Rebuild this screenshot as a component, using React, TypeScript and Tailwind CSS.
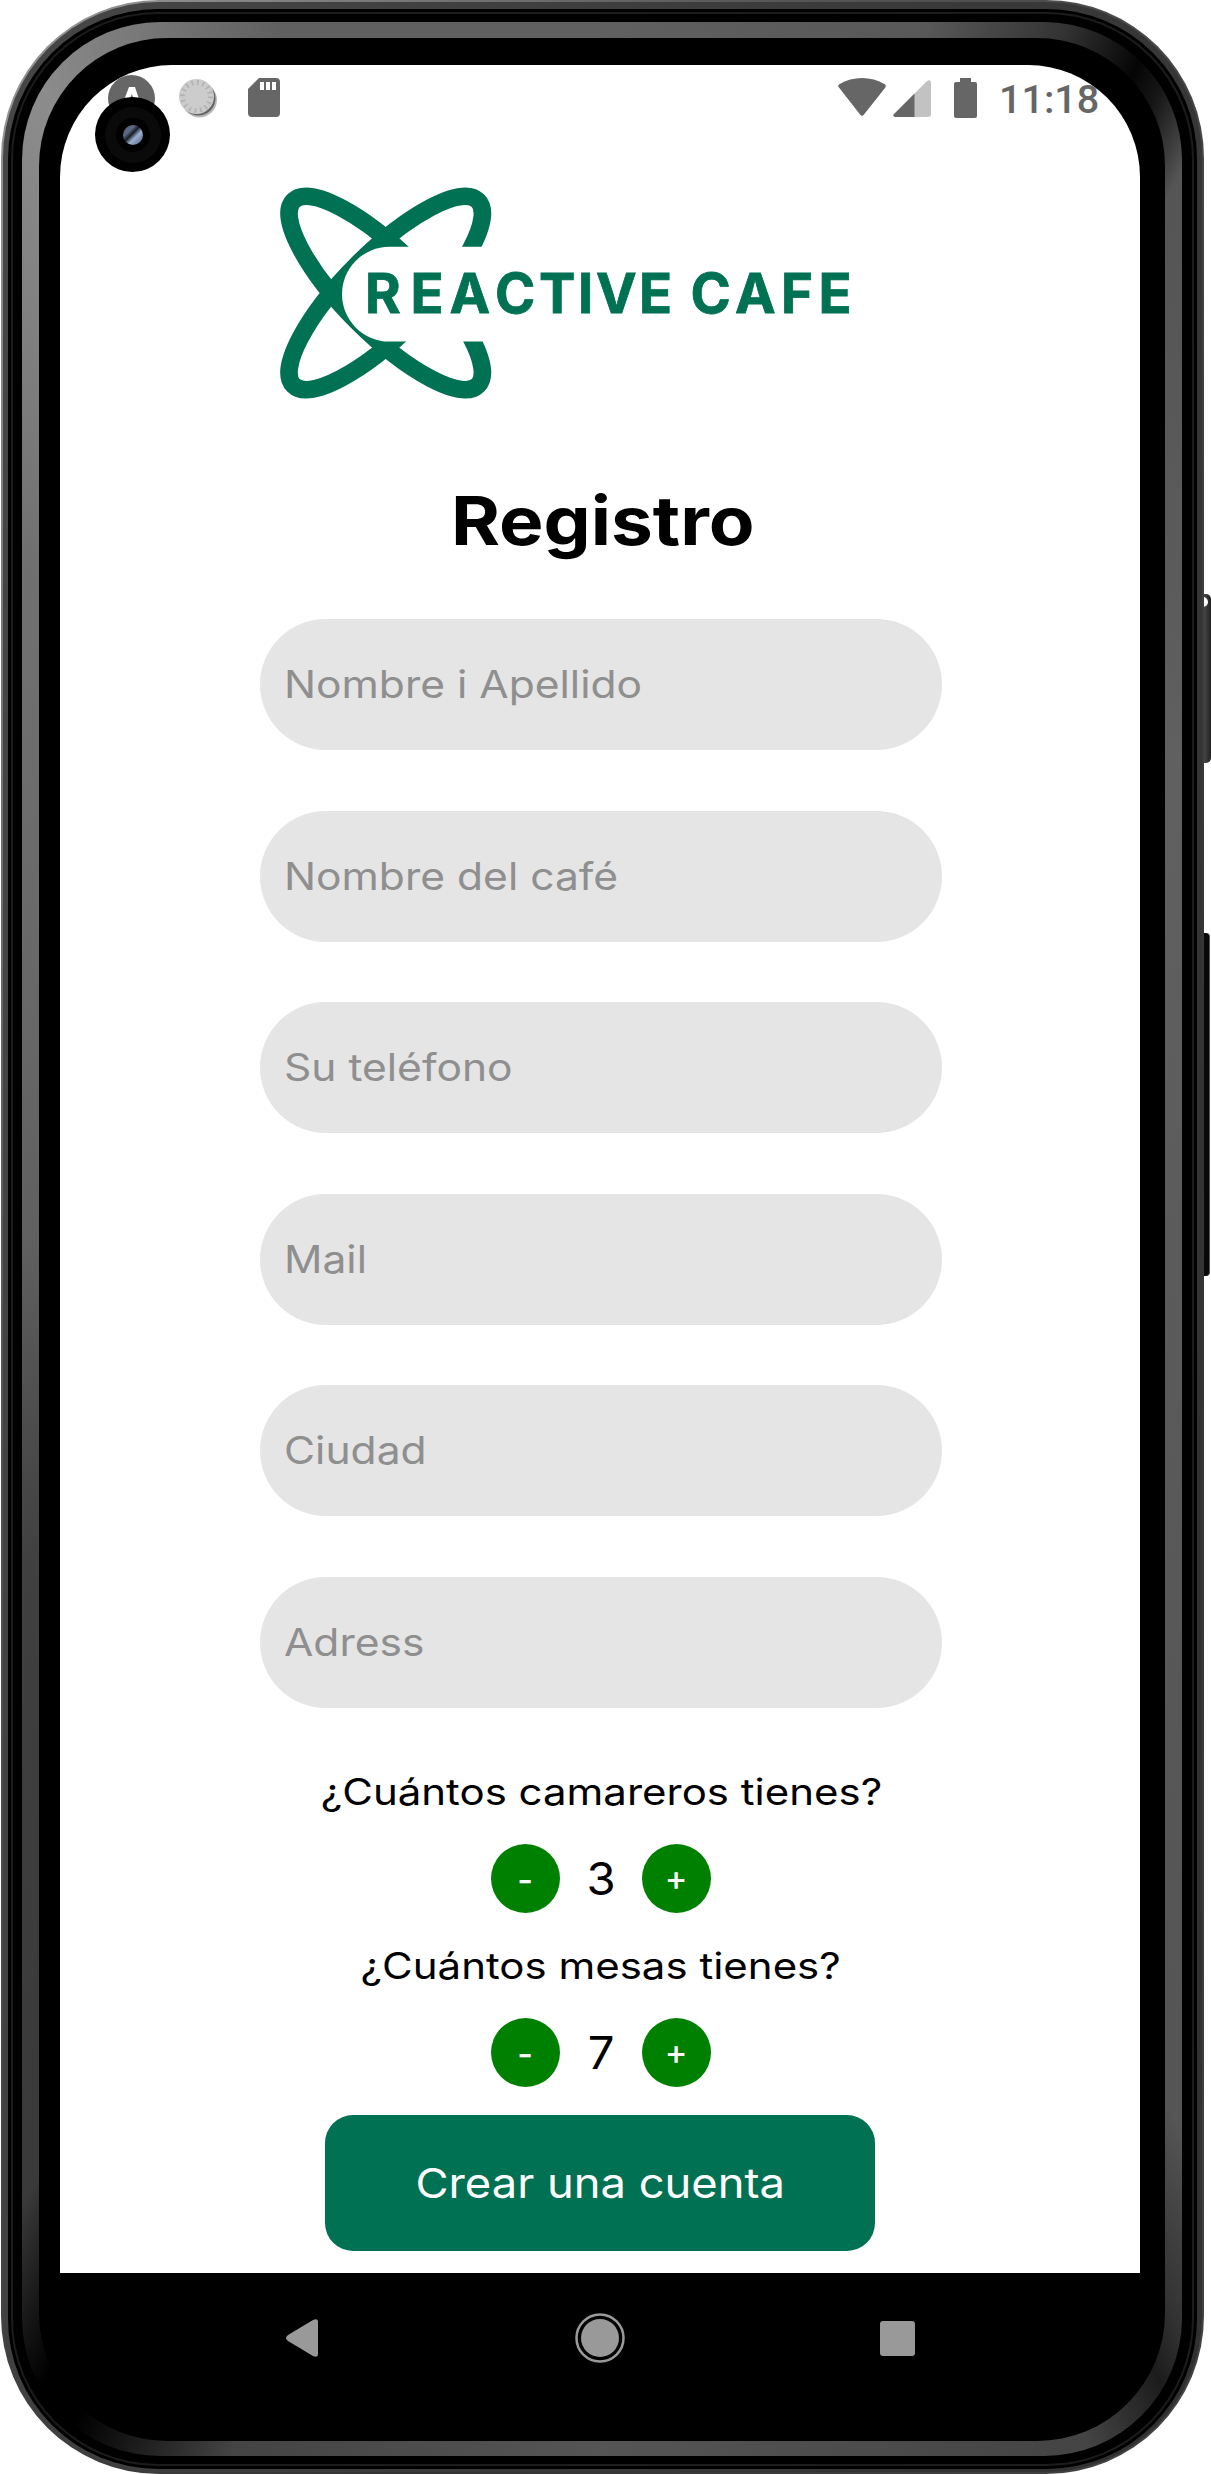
import { useState } from "react";

const fields = ["Nombre i Apellido", "Nombre del café", "Su teléfono", "Mail", "Ciudad", "Adress"];

function StatusBar() {
  return (
    <div className="flex h-[65px] items-start justify-between pl-[48px] pr-[44px] pt-[10px] text-[#666]">
      <div className="flex items-start">
        <svg width="47" height="47" viewBox="0 0 47 47">
          <circle cx="23.5" cy="23.5" r="23.5" fill="#666" />
          <path d="M16 25 21 12h6l6 18h-6l-3-11-3 6z" fill="#fff" />
        </svg>
        <svg className="ml-[23px]" width="42" height="46" viewBox="0 0 42 46">
          <circle cx="21.500" cy="25" r="17.500" fill="#bbb" />
          <circle cx="20.500" cy="23.500" r="17" fill="#666" />
          <circle cx="18.500" cy="21.500" r="17.500" fill="#ccc" />
          <circle cx="18.500" cy="21.500" r="14" fill="none" stroke="#b3b3b3" strokeWidth="5" strokeDasharray="1.800 3.698" />
        </svg>
        <svg className="ml-[28px] mt-[3px]" width="32" height="39" viewBox="0 0 32 39">
          <path d="M11 0h17a4 4 0 0 1 4 4v31a4 4 0 0 1-4 4H4a4 4 0 0 1-4-4V11z" fill="#666" />
          <path d="M12 4h4v8h-4zM18 4h4v8h-4zM24 4h4v8h-4z" fill="#fff" />
        </svg>
      </div>
      <div className="flex items-start">
        <svg className="mt-[3px]" width="48" height="39" viewBox="0 0 48 39">
          <path d="M1 9.500C-.2 8.500 0 7 1.300 6.200 8 2 16 0 24 0s16 2 22.700 6.200C48 7 48.200 8.500 47 10L26 36.500q-2 2.500-4 0z" fill="#666" />
        </svg>
        <svg className="ml-[7px] mt-[5px]" width="38" height="37" viewBox="0 0 38 37">
          <path d="M21 14 34 1q4-2 4 2v31q0 3-3 3H21z" fill="#c2c2c2" />
          <path d="M21.500 13.500V37H2q-3-1-1-3z" fill="#666" />
        </svg>
        <svg className="ml-[23px] mt-[3px]" width="23" height="40" viewBox="0 0 23 40">
          <path d="M6 0h11v4h4q2 0 2 2v32q0 2-2 2H2q-2 0-2-2V6q0-2 2-2h4z" fill="#666" />
        </svg>
        <span className="ml-[22px] mt-[2px] w-[97px] font-[Roboto] text-[39.5px] font-medium leading-[46px]">11:18</span>
      </div>
    </div>
  );
}

function Logo() {
  return (
    <svg className="ml-[218px] block" width="600" height="214" viewBox="278 186 600 214">
      <g fill="none" stroke="#007152" strokeWidth="17.500">
        <ellipse cx="385.700" cy="293" rx="130.500" ry="40.500" transform="rotate(45 385.700 293)" />
        <ellipse cx="385.700" cy="293" rx="130.500" ry="40.500" transform="rotate(-45 385.700 293)" />
      </g>
      <rect x="342" y="246.800" width="220" height="94.700" rx="47.300" fill="#fff" />
      <text
        y="313"
        x="365 410.500 449.500 495 539 578 596 639 690.500 735 781 818.500"
        fill="#007152"
        stroke="#007152"
        strokeWidth="0.800"
        fontFamily="Inter"
        fontWeight="700"
        fontSize="54.500"
      >
        REACTIVECAFE
      </text>
    </svg>
  );
}

function Counter({ label, initial }: { label: string; initial: number }) {
  const [count, setCount] = useState(initial);
  const round =
    "flex size-[69px] items-center justify-center rounded-full bg-[#008000] text-[34px] font-medium leading-none text-white";
  return (
    <div className="flex h-[174px] flex-col items-center">
      <p className="h-[48px] scale-x-[1.135] whitespace-nowrap pl-[2px] text-[37px] font-normal leading-[48px]">{label}</p>
      <div className="mt-[28px] flex items-center justify-center pl-[1px]">
        <button className={round} onClick={() => setCount(Math.max(0, count - 1))}>
          <span className="mt-[4px]">-</span>
        </button>
        <span className="w-[82px] scale-x-[1.05] text-center text-[45px] font-normal leading-[69px]">{count}</span>
        <button className={round} onClick={() => setCount(count + 1)}>
          <span>+</span>
        </button>
      </div>
    </div>
  );
}

function NavBar() {
  return (
    <div className="flex h-[130px] items-center pl-[226px]">
      <svg width="32" height="38" viewBox="0 0 32 38">
        <path d="M27 1q5-2 5 2v32q0 4-5 2L2 22q-4-3 0-6z" fill="#999" />
      </svg>
      <svg className="ml-[257px]" width="50" height="50" viewBox="0 0 50 50">
        <circle cx="25" cy="25" r="23.500" fill="none" stroke="#999" strokeWidth="2.500" />
        <circle cx="25" cy="25" r="19" fill="#999" />
      </svg>
      <div className="ml-[255px] size-[35px] rounded-[3px] bg-[#999]" />
    </div>
  );
}

export default function App() {
  return (
    <div className="relative h-[2474px] w-[1211px] overflow-hidden bg-white font-[Inter,sans-serif] text-black">
      <div className="absolute left-[1198px] top-[594px] h-[169px] w-[13px] rounded-r-[5px] bg-gradient-to-r from-[#222] via-[#444] to-[#222]" />
      <div className="absolute left-[1203px] top-[597px] h-[10px] w-[5px] rounded-r-full bg-white" />
      <div className="absolute left-[1198px] top-[933px] h-[343px] w-[12px] rounded-r-[4px] border-r border-[#555] bg-[#080808]" />
      <div className="relative ml-[1px] h-[2474px] w-[1203px] rounded-[158px] bg-[linear-gradient(120deg,#999,#555_30%,#333_70%,#444)] p-[2px]">
        <div className="h-full rounded-[156px] bg-[linear-gradient(100deg,#464646,#303030)] px-[5px] pb-[3px] pt-[7px]">
          <div className="h-full rounded-[150px] bg-black p-[3px]">
            <div className="h-full rounded-[147px] bg-[#1c1c1c] p-[2px]">
              <div className="h-full rounded-[145px] bg-black pb-[8px] pl-[9px] pr-[10px] pt-[8px]">
                <div className="h-full rounded-[138px] bg-[conic-gradient(#606060_0deg,#585858_15deg,#333_21deg,#050505_24.500deg,#181818_26deg,#555_28.500deg,#606060_50deg,#555_147deg,#333_152deg,#1c1c1c_154deg,#444_158deg,#555_180deg,#444_197deg,#000_204deg,#000_206deg,#3a3a3a_211deg,#404040_240deg,#606060_270deg,#707070_320deg,#8c8c8c_334deg,#606060_345deg,#606060_360deg)] pb-[15px] pl-[17px] pr-[17px] pt-[16px]">
                  <div className="h-full rounded-[128px] bg-black pl-[21px] pt-[27px]">
                    <div className="h-[2208px] w-[1080px] overflow-hidden rounded-t-[112px] bg-white">
                      <StatusBar />
                      <div className="h-[56px]" />
                      <Logo />
                      <h1 className="mt-[79px] h-[84px] origin-center scale-x-[1.115] pl-[5px] text-center text-[67px] font-bold leading-[84px]">
                        Registro
                      </h1>
                      <div className="mt-[56px] flex flex-col items-center gap-[60.500px] pl-[2px]">
                        {fields.map((name) => (
                          <label key={name} className="flex h-[131px] w-[682px] items-center rounded-full bg-[#e5e5e5] px-[24px] pt-[2px]">
                            <input
                              placeholder={name}
                              className="w-[560px] origin-left scale-x-[1.135] bg-transparent text-[37.500px] font-normal outline-none placeholder:text-[#8f8f8f]"
                            />
                          </label>
                        ))}
                      </div>
                      <div className="mt-[60px]">
                        <Counter label="¿Cuántos camareros tienes?" initial={3} />
                        <Counter label="¿Cuántos mesas tienes?" initial={7} />
                      </div>
                      <button className="mx-auto -mt-[1px] flex h-[136px] w-[550px] items-center justify-center rounded-[28px] bg-[#007152] pt-[2px] text-[41px] text-white">
                        <span className="scale-x-[1.105] whitespace-nowrap font-normal">Crear una cuenta</span>
                      </button>
                    </div>
                    <NavBar />
                  </div>
                </div>
              </div>
            </div>
          </div>
        </div>
      </div>
      <div className="absolute left-[95px] top-[97px] flex size-[75px] items-center justify-center rounded-full bg-black">
        <div className="flex size-[56px] items-center justify-center rounded-full bg-[#0a0a0a]">
          <div className="flex size-[34px] items-center justify-center rounded-full bg-black">
            <div className="size-[20px] rounded-full bg-[linear-gradient(135deg,#556,#5b6b88_30%,#1a1d26_45%,#9ab0d0_62%,#4a5a78)]" />
          </div>
        </div>
      </div>
    </div>
  );
}
